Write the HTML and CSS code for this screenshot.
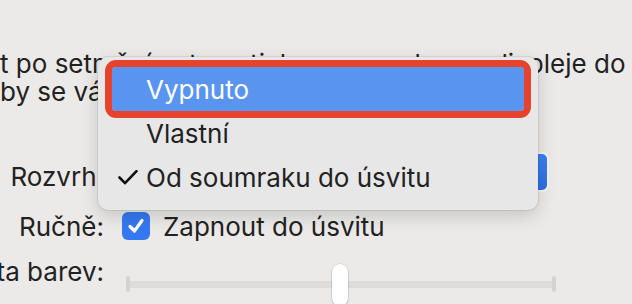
FILE: index.html
```html
<!DOCTYPE html>
<html lang="cs">
<head>
<meta charset="utf-8">
<title>Night Shift</title>
<link rel="stylesheet" href="styles.css">
</head>
<body>
<div class="pane">
  <p class="desc">
    <span class="line">t po setmění automaticky posune barvy displeje do teplejší části spektra</span>
    <span class="line">by se vám po setmění lépe spalo a usínalo.</span>
  </p>
  <div class="rows">
    <div class="row row-schedule">
      <span class="lbl">Rozvrh:</span>
      <div class="popup">Od soumraku do úsvitu</div>
    </div>
    <div class="row row-manual">
      <span class="lbl">Ručně:</span>
      <span class="checkbox">
        <svg viewBox="0 0 28 28" width="28" height="28"><path d="M8 14.5 L12.5 19 L20 8.5" fill="none" stroke="#fff" stroke-width="3.2" stroke-linecap="round" stroke-linejoin="round"/></svg>
      </span>
      <span class="ctext">Zapnout do úsvitu</span>
    </div>
    <div class="row row-temp">
      <span class="lbl lbl-temp">Teplota barev:</span>
      <div class="slider">
        <span class="tick"></span>
        <span class="track"></span>
        <span class="tick"></span>
        <span class="thumb"></span>
      </div>
    </div>
  </div>
</div>

<div class="menu" role="menu">
  <div class="item selected"><span class="mark"></span>Vypnuto</div>
  <div class="item"><span class="mark"></span>Vlastní</div>
  <div class="item"><span class="mark"><svg viewBox="0 0 20 15" width="20" height="15"><path d="M1.5 7.5 L7 13.2 L18.5 1.2" fill="none" stroke="#111" stroke-width="2.6" stroke-linecap="round" stroke-linejoin="round"/></svg></span>Od soumraku do úsvitu</div>
</div>
</body>
</html>
```

FILE: styles.css
```css
html, body {
  margin: 0;
  padding: 0;
}
body {
  width: 632px;
  height: 304px;
  overflow: hidden;
  background: #ebeae9;
  font-family: Inter, "Liberation Sans", sans-serif;
  font-size: 26px;
  color: #222;
  position: relative;
}
.pane {
  padding-top: 50px;
}
.desc {
  margin: 0;
  line-height: 28px;
}
.line {
  display: block;
  white-space: nowrap;
  overflow: hidden;
}
.rows {
  margin-top: 46px;
  display: flex;
  flex-direction: column;
}
.row {
  display: flex;
  align-items: center;
}
.lbl {
  flex: 0 0 auto;
  width: 104px;
  min-width: 0;
  display: flex;
  justify-content: flex-end;
  white-space: nowrap;
}
.row-schedule {
  height: 40px;
  align-items: flex-start;
}
.row-schedule .lbl {
  line-height: 40px;
  margin-top: 5px;
}
.popup {
  margin-left: 4px;
  height: 40px;
  width: 441px;
  box-sizing: border-box;
  border-radius: 7px;
  background: linear-gradient(#3b80f0, #2e6fe0);
  border: 2px solid #f4f4f6;
  color: #fff;
  line-height: 36px;
  padding-left: 14px;
  white-space: nowrap;
}
.row-manual {
  margin-top: 14px;
  height: 40px;
}
.checkbox {
  flex: 0 0 auto;
  margin-left: 18px;
  width: 28px;
  height: 28px;
  border-radius: 6px;
  background: #3478f2;
  display: block;
}
.checkbox svg {
  display: block;
}
.ctext {
  margin-left: 13px;
  white-space: nowrap;
}
.row-temp {
  margin-top: 10px;
  height: 48px;
  align-items: flex-start;
}
.slider {
  position: relative;
  flex: 0 0 auto;
  margin-left: 22px;
  width: 430px;
  height: 48px;
  display: flex;
  align-items: center;
  margin-top: 4px;
}
.track {
  flex: 1;
  height: 7px;
  background: #dddcdb;
}
.tick {
  width: 4px;
  height: 16px;
  border-radius: 2px;
  background: #d4d3d2;
}
.thumb {
  position: absolute;
  left: 206px;
  top: 4px;
  width: 16px;
  height: 42px;
  border-radius: 8px;
  background: #fff;
  box-shadow: 0 0 0 0.5px rgba(0,0,0,0.12), 0 1px 2px rgba(0,0,0,0.2);
}
.menu {
  position: absolute;
  left: 98px;
  top: 57px;
  width: 440px;
  height: 153px;
  box-sizing: border-box;
  padding: 10px 14px;
  border-radius: 10px;
  background: #e8e7e7;
  box-shadow: 0 0 0 1px rgba(0,0,0,0.07), 0 6px 18px rgba(0,0,0,0.16);
}
.item {
  height: 44px;
  display: flex;
  align-items: center;
  padding-left: 6px;
  color: #222;
  white-space: nowrap;
}
.mark {
  width: 28px;
  display: flex;
  align-items: center;
}
.mark svg {
  display: block;
}
.selected {
  background: #5a94f1;
  color: #fff;
  border-radius: 4px;
  outline: 7px solid #e5432e;
  outline-offset: 0;
}
```
